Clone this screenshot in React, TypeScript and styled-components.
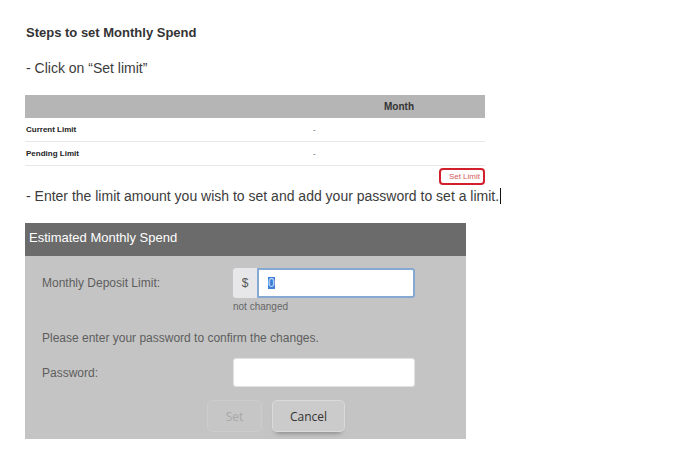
import React from "react";
import styled, { createGlobalStyle } from "styled-components";

const Global = createGlobalStyle`
  html, body { margin: 0; padding: 0; background: #ffffff; }
  body { font-family: "Liberation Sans", Arial, sans-serif; }
`;

const Page = styled.div`
  width: 697px;
  height: 457px;
  padding-left: 25px;
  box-sizing: border-box;
  overflow: hidden;
  display: flex;
  flex-direction: column;
  align-items: flex-start;
`;

const Title = styled.h1`
  margin: 25px 0 0 1px;
  font-size: 13px;
  line-height: 16px;
  font-weight: bold;
  color: #333333;
`;

const Step = styled.p<{ $top: number }>`
  margin: ${(p) => p.$top}px 0 0 1px;
  font-size: 14px;
  line-height: 16px;
  color: #3c3c3c;
  white-space: nowrap;
`;

const Caret = styled.span`
  display: inline-block;
  width: 0;
  height: 16px;
  border-left: 1px solid #111;
  margin-left: 1px;
  vertical-align: -3px;
`;

const Table = styled.div`
  margin-top: 19px;
  width: 460px;
  display: flex;
  flex-direction: column;
`;

const Row = styled.div<{ $head?: boolean }>`
  display: grid;
  grid-template-columns: 1fr 172px;
  align-items: center;
  height: 23px;
  background: ${(p) => (p.$head ? "#b5b5b5" : "transparent")};
  border-bottom: ${(p) => (p.$head ? "none" : "1px solid #e8e8e8")};
  font-size: 8px;
  color: #222;
`;

const Label = styled.span`
  font-weight: bold;
  padding-left: 1px;
`;

const Value = styled.span`
  color: #555;
`;

const HeadCell = styled.span`
  font-size: 10px;
  font-weight: bold;
  color: #333;
  text-align: center;
`;

const LinkRow = styled.div`
  width: 460px;
  display: flex;
  justify-content: flex-end;
  margin-top: 2px;
`;

const SetLimitLink = styled.span`
  width: 46px;
  height: 17px;
  box-sizing: border-box;
  border: 2px solid #d11f2c;
  border-radius: 4px;
  font-size: 8px;
  line-height: 13px;
  color: #d45a5a;
  text-align: right;
  padding-right: 3px;
`;

const Modal = styled.div`
  margin-top: 19px;
  width: 441px;
  display: flex;
  flex-direction: column;
  background: #c4c4c4;
`;

const ModalHeader = styled.div`
  height: 33px;
  box-sizing: border-box;
  padding: 7px 0 0 4px;
  background: #6b6b6b;
  color: #ffffff;
  font-size: 13px;
  line-height: 15px;
`;

const ModalBody = styled.div`
  padding: 12px 0 7px 16px;
  display: flex;
  flex-direction: column;
`;

const FieldRow = styled.div<{ $top?: number }>`
  display: grid;
  grid-template-columns: 192px 182px;
  align-items: center;
  margin-top: ${(p) => p.$top ?? 0}px;
`;

const FieldLabel = styled.span`
  font-size: 12px;
  color: #5e5e5e;
  padding-left: 1px;
`;

const InputGroup = styled.div`
  display: flex;
  height: 30px;
`;

const Addon = styled.span`
  width: 24px;
  background: #e7e7ea;
  border-radius: 3px 0 0 3px;
  display: flex;
  align-items: center;
  justify-content: center;
  font-size: 12px;
  color: #555;
`;

const TextInput = styled.div<{ $focus?: boolean; $h: number }>`
  flex: 1;
  height: ${(p) => p.$h}px;
  box-sizing: border-box;
  background: #ffffff;
  border: ${(p) => (p.$focus ? "2px solid #86a9d4" : "1px solid #e2e2e2")};
  border-radius: ${(p) => (p.$focus ? "0 3px 3px 0" : "3px")};
  display: flex;
  align-items: center;
  padding-left: 9px;
`;

const Selected = styled.span`
  font-size: 12px;
  line-height: 12px;
  background: #3f7fd8;
  color: #cfe0fb;
  padding: 0;
`;

const Hint = styled.span`
  grid-column: 2;
  margin-top: 3px;
  font-size: 10px;
  line-height: 12px;
  color: #666;
`;

const Note = styled.p`
  margin: 18px 0 0 1px;
  font-size: 12px;
  line-height: 14px;
  color: #5e5e5e;
`;

const Buttons = styled.div`
  margin-top: 13px;
  padding-left: 166px;
  display: flex;
  gap: 10px;
`;

const Button = styled.button<{ $disabled?: boolean; $w: number }>`
  width: ${(p) => p.$w}px;
  height: 32px;
  border-radius: 5px;
  font-family: "Open Sans", "Liberation Sans", sans-serif;
  font-size: 12px;
  background: ${(p) => (p.$disabled ? "#c6c6c6" : "#cbcbcb")};
  border: 1px solid ${(p) => (p.$disabled ? "#cccccc" : "#dadada")};
  color: ${(p) => (p.$disabled ? "#a8a8a8" : "#333")};
  box-shadow: ${(p) => (p.$disabled ? "none" : "0 5px 5px -4px rgba(0,0,0,0.35)")};
  padding: 0;
  cursor: pointer;
`;

export default function App() {
  return (
    <>
      <Global />
      <Page>
        <Title>Steps to set Monthly Spend</Title>
        <Step $top={19}>- Click on “Set limit”</Step>
        <Table>
          <Row $head>
            <span />
            <HeadCell>Month</HeadCell>
          </Row>
          <Row>
            <Label>Current Limit</Label>
            <Value>-</Value>
          </Row>
          <Row>
            <Label>Pending Limit</Label>
            <Value>-</Value>
          </Row>
        </Table>
        <LinkRow>
          <SetLimitLink>Set Limit</SetLimitLink>
        </LinkRow>
        <Step $top={3}>
          - Enter the limit amount you wish to set and add your password to set a limit.
          <Caret />
        </Step>
        <Modal>
          <ModalHeader>Estimated Monthly Spend</ModalHeader>
          <ModalBody>
            <FieldRow>
              <FieldLabel>Monthly Deposit Limit:</FieldLabel>
              <InputGroup>
                <Addon>$</Addon>
                <TextInput $focus $h={30}>
                  <Selected>0</Selected>
                </TextInput>
              </InputGroup>
              <Hint>not changed</Hint>
            </FieldRow>
            <Note>Please enter your password to confirm the changes.</Note>
            <FieldRow $top={13}>
              <FieldLabel>Password:</FieldLabel>
              <TextInput $h={29} />
            </FieldRow>
            <Buttons>
              <Button $disabled $w={55}>Set</Button>
              <Button $w={73}>Cancel</Button>
            </Buttons>
          </ModalBody>
        </Modal>
      </Page>
    </>
  );
}
